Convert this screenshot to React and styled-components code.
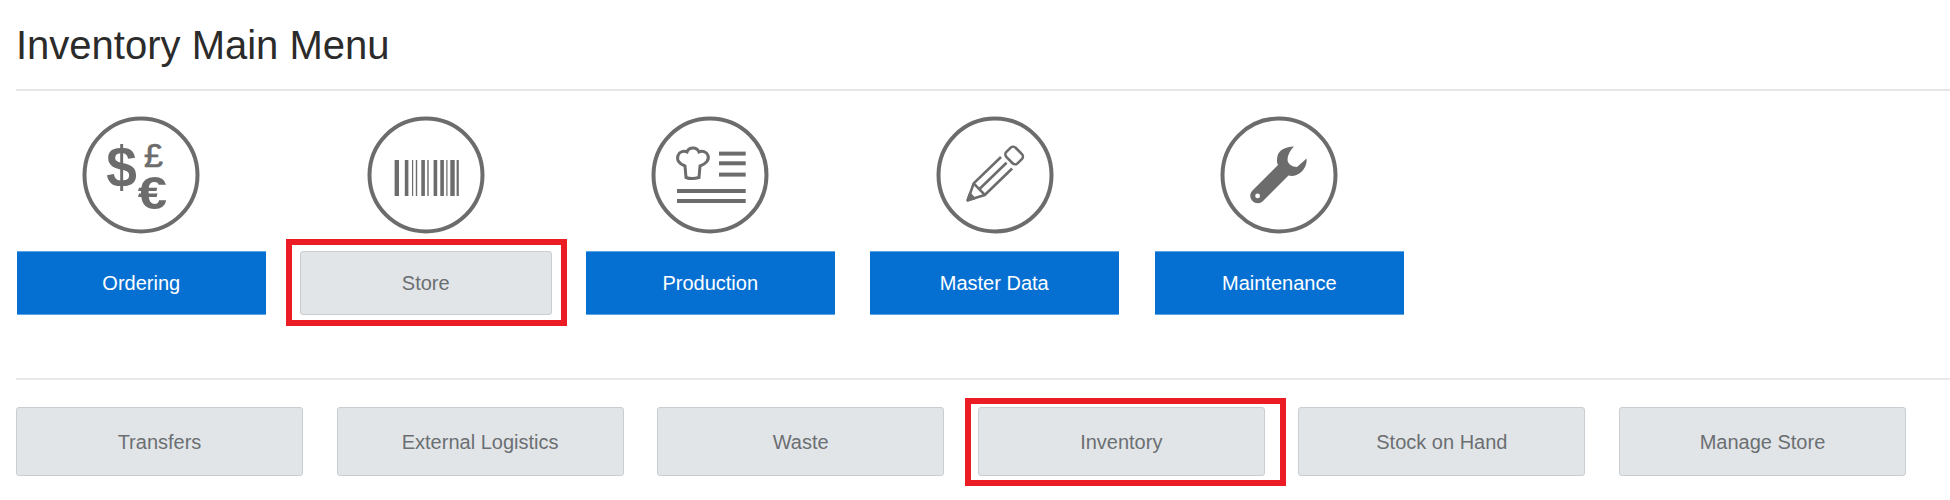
import React from 'react'
import styled, { createGlobalStyle } from 'styled-components'

const GlobalStyle = createGlobalStyle`
    html, body {
        margin: 0;
        padding: 0;
        background: #fff;
    }
    body {
        font-family: "Liberation Sans", Arial, sans-serif;
    }
`
const Page = styled.div`
    width: 1950px;
    height: 500px;
    overflow: hidden;
    padding-left: 16px;
    box-sizing: border-box;
`
const Title = styled.h1`
    margin: 0;
    height: 89px;
    line-height: 90px;
    font-size: 40px;
    font-weight: 400;
    color: #2b2b2b;
    border-bottom: 2px solid #e6e6e6;
    box-sizing: content-box;
`
const MainRow = styled.div`
    display: grid;
    grid-template-columns: repeat(5, 248.5px);
    column-gap: 36px;
    padding: 26px 0 0 1px;
`
const MainItem = styled.div`
    display: flex;
    flex-direction: column;
    align-items: stretch;
    gap: 18px;
`
const IconHolder = styled.div`
    display: flex;
    justify-content: center;
    align-items: center;
    height: 116px;
`
const Slot = styled.div`
    position: relative;
    display: flex;
    margin: ${p => p.$margin || '0'};
`
const MenuButton = styled.button`
    flex: 1;
    height: ${p => p.$height}px;
    padding: ${p => p.$textDrop || 0}px 0 0;
    box-sizing: border-box;
    font-family: inherit;
    font-size: 20px;
    color: ${p => p.$active ? '#fff' : '#6b6f72'};
    background: ${p => p.$active ? '#0670d2' : '#e2e5e8'};
    border: 1px solid ${p => p.$active ? '#59a5e6' : '#c9ced2'};
    border-width: ${p => p.$active ? '1px 0 1px 0' : '1px'};
    border-radius: ${p => p.$active ? '0' : '3px'};
`
const Marker = styled.div`
    position: absolute;
    inset: ${p => p.$inset};
    border: 6px solid #ec1c24;
    pointer-events: none;
`
const Divider = styled.div`
    height: 2px;
    margin-top: 63px;
    background: #e8e8e8;
`
const SubRow = styled.div`
    display: grid;
    grid-template-columns: repeat(6, 287px);
    column-gap: 33.6px;
    padding: 27px 0 0 0;
`

const GREY = '#6c6c6c'

const Ring = ({ children }) => (
    <svg width="118" height="118" viewBox="-1 -1 118 118" style={{ flex: 'none' }}>
        <circle cx="58" cy="58" r="56.5" fill="none" stroke={GREY} strokeWidth="4" />
        {children}
    </svg>
)

const CurrencyIcon = () => (
    <Ring>
        <g fill={GREY} fontFamily="'Liberation Sans', Arial, sans-serif" textAnchor="middle">
            <text transform="translate(38.5 69.5) scale(1 1.05)" fontSize="55" fontWeight="700">$</text>
            <text x="70.5" y="49.5" fontSize="34" stroke={GREY} strokeWidth="0.7">£</text>
            <text transform="translate(69.5 92) scale(1.15 1)" fontSize="46" fontWeight="700">€</text>
        </g>
    </Ring>
)

const BARS = [
    [26.6, 4.4], [36.8, 3.6], [44, 1.2], [47.8, 1.4], [53.3, 3.6], [59.3, 1.4],
    [65.6, 3.6], [72.3, 3.6], [78.3, 1.2], [82.3, 4.4], [88.6, 2.2],
]

const BarcodeIcon = () => (
    <Ring>
        {BARS.map(([x, w]) => <rect key={x} x={x} y="43" width={w} height="36" fill={GREY} />)}
    </Ring>
)

const ChefIcon = () => (
    <Ring>
        <path
            d="M33 49 C27 47 24.5 43 26 38.5 C27.5 34.5 32 33.5 35 35 C36 32 38 31 41 31 C44 31 46 32.5 47 35 C50 33.5 54.5 34.5 56 38.5 C57.5 43 54 47 48 49 L47 60.5 C42 62 38 62 34 60.5 Z"
            fill="none"
            stroke={GREY}
            strokeWidth="3"
        />
        <g stroke={GREY} strokeWidth="4">
            <line x1="67" y1="36.6" x2="93.7" y2="36.6" />
            <line x1="67" y1="46.3" x2="93.7" y2="46.3" />
            <line x1="67" y1="57.6" x2="93.7" y2="57.6" />
            <line x1="25" y1="74" x2="93.7" y2="74" />
            <line x1="25" y1="84" x2="93.7" y2="84" />
        </g>
    </Ring>
)

const PencilIcon = () => (
    <Ring>
        <g transform="translate(30 84) rotate(-44)" fill="none" stroke={GREY} strokeWidth="2.6" strokeLinejoin="round">
            <path d="M55 -8 L17 -8 L1 0 L17 8 L55 8" />
            <line x1="17" y1="-8" x2="17" y2="8" />
            <line x1="17" y1="0" x2="55" y2="0" />
            <rect x="59" y="-8" width="13" height="16" rx="3.5" />
            <path d="M1 0 L7 -3 L7 3 Z" fill={GREY} />
        </g>
    </Ring>
)

const WrenchIcon = () => (
    <Ring>
        <path
            fillRule="evenodd"
            fill={GREY}
            d="M73 29.5 C65 29.5 58 33 56.5 39 C55.5 43 56 46 57 48 L31.5 73.5 C28.5 76.5 28.5 81 31.5 84 C34.5 87 39 87 42 84 L67.5 58.5 C71 59.5 75 59 79 56 C84 52 86 47 85.6 41.6 L76 50 C71 50 67 47 66.5 43 C66.5 38 69 33.5 73 29.5 Z M36.6 76.5 A2.4 2.4 0 1 0 36.6 81.3 A2.4 2.4 0 1 0 36.6 76.5 Z"
        />
    </Ring>
)

const MAIN_ITEMS = [
    { label: 'Ordering', icon: <CurrencyIcon />, active: true },
    { label: 'Store', icon: <BarcodeIcon />, margin: '0 -1.5px', marker: '-12px -15px -11px -14px' },
    { label: 'Production', icon: <ChefIcon />, active: true },
    { label: 'Master Data', icon: <PencilIcon />, active: true, margin: '0 0 0 -1px' },
    { label: 'Maintenance', icon: <WrenchIcon />, active: true },
]

const SUB_ITEMS = [
    { label: 'Transfers' },
    { label: 'External Logistics' },
    { label: 'Waste' },
    { label: 'Inventory', marker: '-9px -21px -10px -13px' },
    { label: 'Stock on Hand' },
    { label: 'Manage Store' },
]

export default function App() {
    return (
        <Page>
            <GlobalStyle />
            <Title>Inventory Main Menu</Title>
            <MainRow>
                {MAIN_ITEMS.map(item => (
                    <MainItem key={item.label}>
                        <IconHolder>{item.icon}</IconHolder>
                        <Slot $margin={item.margin}>
                            <MenuButton $height={64} $active={item.active}>{item.label}</MenuButton>
                            {item.marker && <Marker $inset={item.marker} />}
                        </Slot>
                    </MainItem>
                ))}
            </MainRow>
            <Divider />
            <SubRow>
                {SUB_ITEMS.map(item => (
                    <Slot key={item.label}>
                        <MenuButton $height={69} $textDrop={2}>{item.label}</MenuButton>
                        {item.marker && <Marker $inset={item.marker} />}
                    </Slot>
                ))}
            </SubRow>
        </Page>
    )
}
